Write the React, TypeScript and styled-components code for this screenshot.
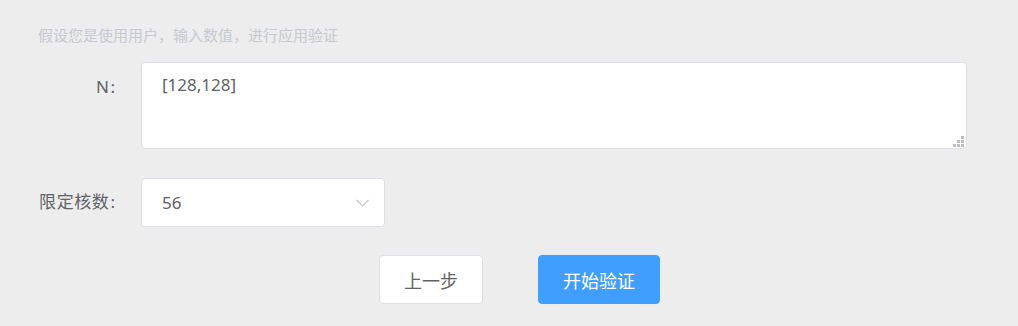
import React, { useState } from 'react'
import styled, { createGlobalStyle } from 'styled-components'

const GlobalStyle = createGlobalStyle`
  html, body {
    margin: 0;
    padding: 0;
    background: #ededed;
  }
  body {
    font-family: "Noto Sans", "Noto Sans CJK SC", sans-serif;
  }
`

const Page = styled.div`
  width: 1018px;
  height: 326px;
  box-sizing: border-box;
  padding: 24px 52px 0 0;
  background: #ededed;
`

const Hint = styled.p`
  margin: 0 0 16px 38px;
  font-size: 15px;
  line-height: 22px;
  color: #c6c9cf;
`

const FormRow = styled.div<{ $gap: number }>`
  display: flex;
  align-items: flex-start;
  margin-bottom: ${(p) => p.$gap}px;
`

const Label = styled.label<{ $top: number }>`
  width: 141px;
  flex-shrink: 0;
  box-sizing: border-box;
  padding-right: 26px;
  padding-top: ${(p) => p.$top}px;
  text-align: right;
  font-size: 17px;
  line-height: 24px;
  letter-spacing: 0.6px;
  color: #606266;
`

const Colon = styled.span`
  margin-left: 1px;
  letter-spacing: 0;
`

const AreaWrap = styled.div`
  position: relative;
`

const TextArea = styled.textarea`
  display: block;
  width: 826px;
  height: 87px;
  box-sizing: border-box;
  padding: 10px 20px;
  border: 1px solid #dcdfe6;
  border-radius: 4px;
  background: #fff;
  font-family: "Noto Sans", "Noto Sans CJK SC", sans-serif;
  font-size: 17px;
  line-height: 24px;
  color: #606266;
  outline: none;
  resize: none;
`

const Grip = styled.svg`
  position: absolute;
  right: 3px;
  bottom: 2px;
  pointer-events: none;
`

const SelectBox = styled.div`
  display: flex;
  align-items: center;
  justify-content: space-between;
  width: 244px;
  height: 49px;
  box-sizing: border-box;
  padding: 0 15px 0 20px;
  border: 1px solid #dcdfe6;
  border-radius: 4px;
  background: #fff;
  font-size: 17px;
  color: #606266;
  cursor: pointer;
`

const ButtonBar = styled.div`
  display: flex;
  gap: 55px;
  padding-left: 379px;
`

const Button = styled.button<{ $primary?: boolean; $width: number }>`
  width: ${(p) => p.$width}px;
  height: 49px;
  box-sizing: border-box;
  border: 1px solid ${(p) => (p.$primary ? '#409eff' : '#dcdfe6')};
  border-radius: 4px;
  background: ${(p) => (p.$primary ? '#409eff' : '#fff')};
  color: ${(p) => (p.$primary ? '#fff' : '#606266')};
  font-family: "Noto Sans", "Noto Sans CJK SC", sans-serif;
  font-size: 18px;
  cursor: pointer;
`

const Chevron = () => (
  <svg width="13" height="8" viewBox="0 0 13 8" fill="none">
    <path d="M0.5 0.8 L6.5 6.8 L12.5 0.8" stroke="#c0c4cc" strokeWidth="1.2" />
  </svg>
)

const dots = [
  [8, 0],
  [4, 4],
  [8, 4],
  [0, 8],
  [4, 8],
  [8, 8],
]

const App = (): JSX.Element => {
  const [n, setN] = useState('[128,128]')
  return (
    <Page>
      <GlobalStyle />
      <Hint>假设您是使用用户，输入数值，进行应用验证</Hint>
      <FormRow $gap={29}>
        <Label $top={13}>
          N<Colon>:</Colon>
        </Label>
        <AreaWrap>
          <TextArea value={n} onChange={(e) => setN(e.target.value)} />
          <Grip width="11" height="11" viewBox="0 0 11 11">
            {dots.map(([x, y]) => (
              <rect key={`${x}-${y}`} x={x} y={y} width="3" height="3" fill="#bdbdbd" />
            ))}
          </Grip>
        </AreaWrap>
      </FormRow>
      <FormRow $gap={28}>
        <Label $top={12}>
          限定核数<Colon>:</Colon>
        </Label>
        <SelectBox>
          <span>56</span>
          <Chevron />
        </SelectBox>
      </FormRow>
      <ButtonBar>
        <Button $width={104}>上一步</Button>
        <Button $primary $width={122}>开始验证</Button>
      </ButtonBar>
    </Page>
  )
}

export default App
